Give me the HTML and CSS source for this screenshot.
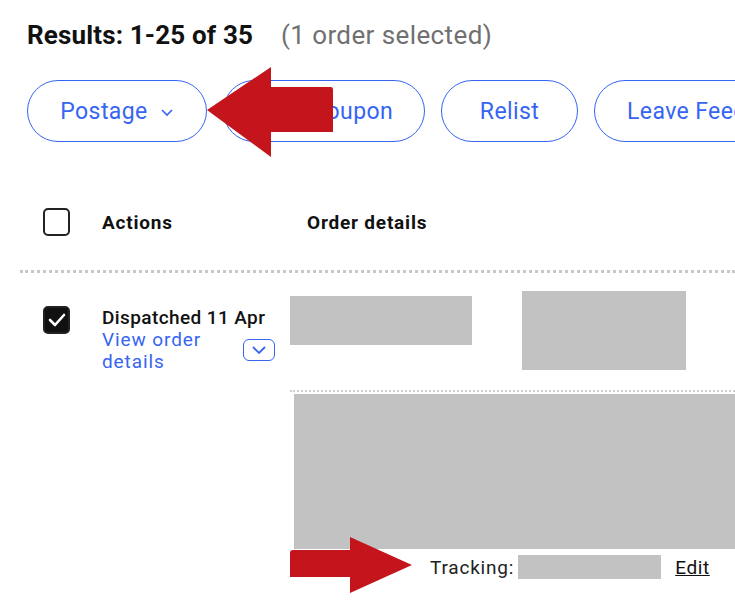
FILE: index.html
```html
<!DOCTYPE html>
<html lang="en">
<head>
  <meta charset="UTF-8">
  <meta name="viewport" content="width=device-width, initial-scale=1.0">
  <title>Orders</title>
  <link rel="stylesheet" href="styles.css">
</head>
<body>
  <div class="page">
    <div class="results">
      <span class="results-count">Results: 1-25 of 35</span>
      <span class="results-selected">(1 order selected)</span>
    </div>

    <div class="actions-bar">
      <button class="pill">Postage
        <svg class="pill-caret" width="14" height="10" viewBox="0 0 14 10"><path d="M2 3l5 5 5-5" fill="none" stroke="#3665f3" stroke-width="1.6"/></svg>
      </button>
      <button class="pill pill-coupon">Send coupon</button>
      <button class="pill pill-relist">Relist</button>
      <button class="pill pill-feedback">Leave Feedback</button>

      <svg class="arrow arrow-left" width="128" height="90" viewBox="0 0 128 90">
        <path d="M0 43 L64 0 L64 20 L124 20 Q126 20 126 23 L126 65 L64 65 L64 90 Z" fill="#c4141c"/>
      </svg>
    </div>

    <div class="table-head">
      <div class="col-check"><span class="checkbox"></span></div>
      <div class="col-actions">Actions</div>
      <div class="col-details">Order details</div>
    </div>

    <div class="divider"></div>

    <div class="order-row">
      <div class="col-check">
        <span class="checkbox checked">
          <svg width="18" height="14" viewBox="0 0 18 14"><path d="M2 7l5 5 9-10" fill="none" stroke="#fff" stroke-width="2.6" stroke-linecap="round" stroke-linejoin="round"/></svg>
        </span>
      </div>
      <div class="order-actions">
        <div class="dispatched">Dispatched 11 Apr</div>
        <div class="view-line">
          <a class="view-link" href="#">View order details</a>
          <span class="expand">
            <svg width="16" height="10" viewBox="0 0 16 10"><path d="M2 2l6 6 6-6" fill="none" stroke="#3665f3" stroke-width="1.8"/></svg>
          </span>
        </div>
      </div>
      <div class="order-body">
        <div class="order-top">
          <div class="redact redact-a"></div>
          <div class="redact redact-b"></div>
        </div>
        <div class="dotted"></div>
        <div class="redact redact-big"></div>
        <div class="tracking">
          <svg class="arrow arrow-right" width="124" height="56" viewBox="0 0 124 56">
            <path d="M122 28 L60 0 L60 13 L3 13 Q0 13 0 16 L0 40 L60 40 L60 56 Z" fill="#c4141c"/>
          </svg>
          <span class="tracking-label">Tracking:</span>
          <span class="redact redact-track"></span>
          <a class="edit-link" href="#">Edit</a>
        </div>
      </div>
    </div>
  </div>
</body>
</html>
```

FILE: styles.css
```css
html, body {
  margin: 0;
  background: #fff;
  overflow: hidden;
}
body {
  font-family: Roboto, "Liberation Sans", sans-serif;
  color: #111;
}
.page {
  width: 735px;
  height: 600px;
  overflow: hidden;
  position: relative;
}
.results {
  padding: 20px 0 0 27px;
  height: 31px;
  white-space: nowrap;
}
.results-count {
  font-size: 26px;
  font-weight: 700;
  letter-spacing: 0.15px;
}
.results-selected {
  font-size: 26px;
  color: #707070;
  margin-left: 24px;
  letter-spacing: 0.4px;
}
.actions-bar {
  position: relative;
  display: flex;
  gap: 16px;
  padding: 29px 0 0 27px;
  white-space: nowrap;
}
.pill {
  flex: none;
  height: 62px;
  border: 1.5px solid #3665f3;
  border-radius: 31px;
  background: #fff;
  color: #3665f3;
  font-family: Roboto, "Liberation Sans", sans-serif;
  font-size: 23px;
  letter-spacing: 0.4px;
  padding: 0 32px;
  display: flex;
  align-items: center;
  gap: 12px;
}
.pill:first-child {
  width: 180px;
  justify-content: center;
}
.pill-coupon {
  width: 202px;
  justify-content: center;
}
.pill-relist {
  width: 137px;
  justify-content: center;
}
.pill-caret {
  margin-top: 2px;
}
.arrow {
  position: absolute;
}
.arrow-left {
  left: 207px;
  top: 16px;
}
.table-head {
  display: flex;
  align-items: center;
  margin-top: 65px;
  height: 30px;
  font-size: 19px;
  font-weight: 700;
  letter-spacing: 0.8px;
}
.col-check {
  width: 102px;
  padding-left: 43px;
  box-sizing: border-box;
  flex: none;
}
.col-actions {
  width: 205px;
  flex: none;
}
.checkbox {
  display: flex;
  align-items: center;
  justify-content: center;
  width: 27px;
  height: 28px;
  box-sizing: border-box;
  border: 2px solid #222;
  border-radius: 5px;
}
.checkbox.checked {
  background: #111;
}
.divider {
  margin: 33px 0 0 20px;
  border-top: 3px dotted #c8c8c8;
}
.order-row {
  display: flex;
  align-items: flex-start;
}
.order-row .col-check {
  padding-top: 33px;
}
.order-actions {
  width: 188px;
  flex: none;
  padding-top: 34px;
}
.dispatched {
  font-size: 19px;
  font-weight: 500;
  letter-spacing: 0.4px;
  line-height: 22px;
}
.view-line {
  display: flex;
  align-items: flex-start;
  justify-content: space-between;
  width: 173px;
}
.view-link {
  color: #3665f3;
  text-decoration: none;
  font-size: 19px;
  letter-spacing: 0.9px;
  line-height: 22px;
  width: 110px;
}
.expand {
  margin-top: 10px;
  width: 32px;
  height: 22px;
  box-sizing: border-box;
  border: 1.5px solid #3665f3;
  border-radius: 6px;
  display: flex;
  align-items: center;
  justify-content: center;
}
.order-body {
  flex: 1;
  padding-top: 18px;
}
.order-top {
  display: flex;
  align-items: flex-start;
  height: 99px;
}
.redact {
  background: #c2c2c2;
}
.redact-a {
  width: 182px;
  height: 49px;
  margin-top: 5px;
}
.redact-b {
  width: 164px;
  height: 79px;
  margin-left: 50px;
}
.dotted {
  border-top: 2px dotted #cfcfcf;
}
.redact-big {
  margin: 2px 0 0 4px;
  height: 155px;
}
.tracking {
  position: relative;
  display: flex;
  align-items: center;
  height: 36px;
  padding-left: 140px;
  font-size: 19px;
  letter-spacing: 0.8px;
  color: #222;
}
.arrow-right {
  left: 0;
  top: -12px;
}
.redact-track {
  display: inline-block;
  width: 143px;
  height: 24px;
  margin-left: 4px;
}
.edit-link {
  color: #111;
  margin-left: 14px;
  letter-spacing: 0.6px;
  text-decoration: underline;
}
```
